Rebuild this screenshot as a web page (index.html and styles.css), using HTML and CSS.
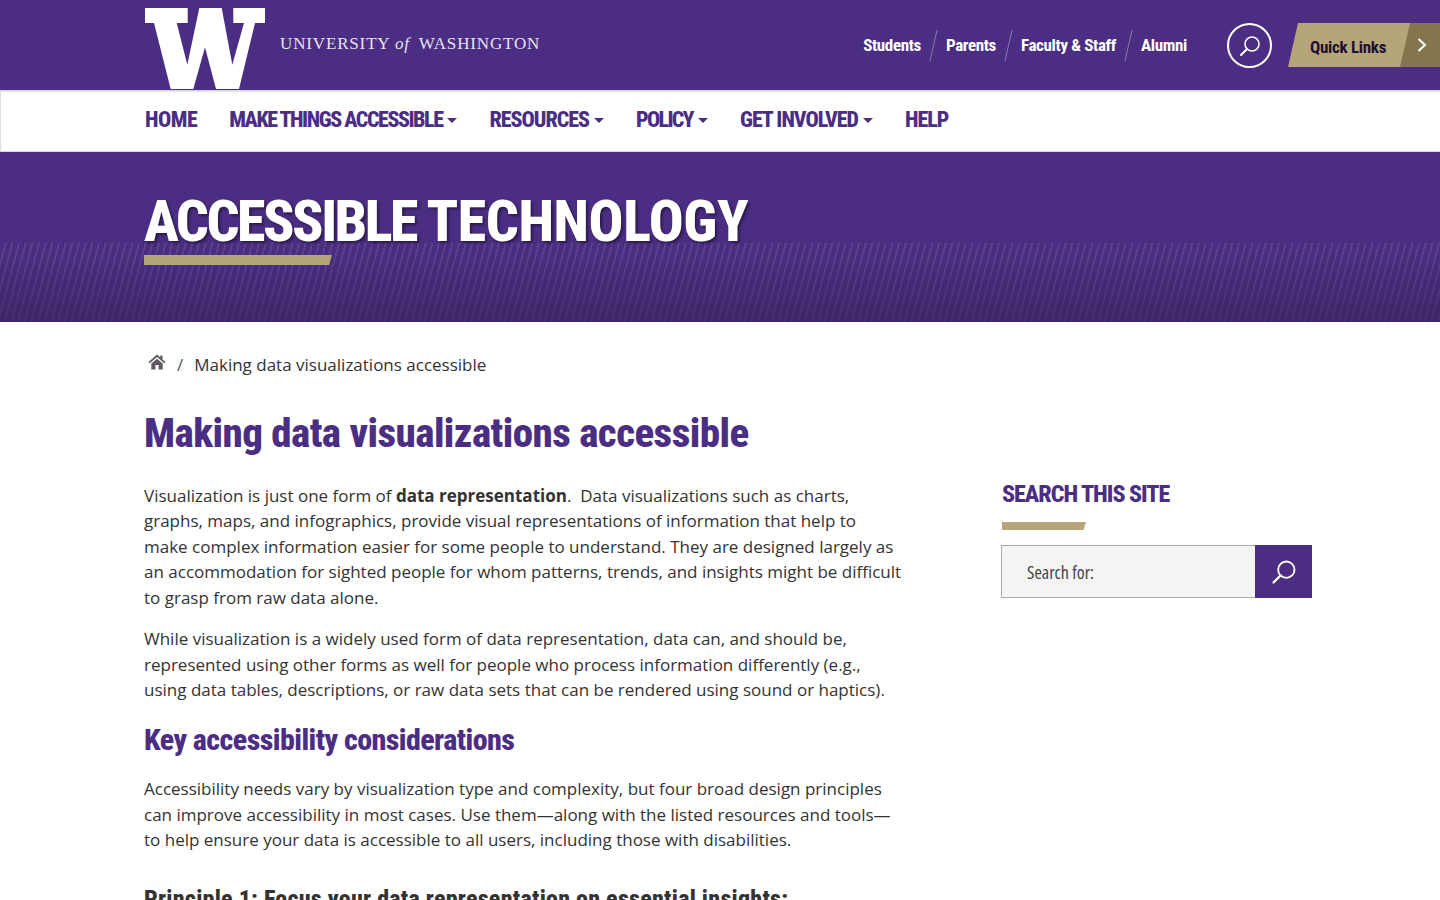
FILE: index.html
```html
<!DOCTYPE html>
<html lang="en">
<head>
<meta charset="utf-8">
<title>Making data visualizations accessible</title>
<link rel="stylesheet" href="styles.css">
</head>
<body>
<header class="top">
  <div class="brand">
    <svg class="w-logo" viewBox="0 0 121 82" aria-hidden="true"><polygon fill="#fff" points="0,0 42.7,0 42.7,15 31.7,15 42.3,56.7 54.3,0 76.7,0 87.3,56.7 99,15 88.3,15 88.3,0 120,0 120,15 110,15 94,81 71,81 60,39.3 48.3,81 25.7,81 9,15 0,15"/></svg>
    <span class="wordmark">UNIVERSITY <i>of</i> WASHINGTON</span>
  </div>
  <div class="top-right">
    <nav class="audience">
      <a>Students</a><a>Parents</a><a>Faculty &amp; Staff</a><a>Alumni</a>
    </nav>
    <div class="search-circle">
      <svg viewBox="0 0 24 24" width="24" height="24" aria-hidden="true"><circle cx="14" cy="10" r="7" fill="none" stroke="#fff" stroke-width="1.6"/><path d="M9 15 L3 21" stroke="#fff" stroke-width="2" stroke-linecap="round"/></svg>
    </div>
    <div class="quick">
      <span class="quick-label">Quick Links</span>
      <span class="quick-arrow"><svg viewBox="0 0 12 16" width="12" height="16" aria-hidden="true"><path d="M2.5 2 L9 8 L2.5 14" fill="none" stroke="#fff" stroke-width="2"/></svg></span>
    </div>
  </div>
</header>
<nav class="main-nav">
  <a class="loose">HOME</a>
  <a class="caret tight-more">MAKE THINGS ACCESSIBLE</a>
  <a class="caret">RESOURCES</a>
  <a class="caret tight">POLICY</a>
  <a class="caret">GET INVOLVED</a>
  <a>HELP</a>
</nav>
<section class="hero">
  <div class="hero-title"><span class="hero-first">ACCESSIBLE</span> <span class="hero-second">TECHNOLOGY</span></div>
  <div class="hero-bar"></div>
</section>
<div class="page">
  <main class="content">
    <div class="crumbs">
      <svg class="home" viewBox="0 0 18 16" width="18" height="16" aria-hidden="true"><path fill="#5f5a60" d="M9 0.5 L0.5 8 L1.7 9.3 L9 3 L16.3 9.3 L17.5 8 L14.5 5.4 V1.5 H12.3 V3.4 Z M3.3 9.6 V15.5 H7.4 V11 H10.6 V15.5 H14.7 V9.6 L9 4.7 Z"/></svg>
      <span class="sep">/</span>
      <span>Making data visualizations accessible</span>
    </div>
    <h1>Making data visualizations accessible</h1>
    <p>Visualization is just one form of <b>data representation</b>.&nbsp; Data visualizations such as charts, graphs, maps, and infographics, provide visual representations of information that help to make complex information easier for some people to understand. They are designed largely as an accommodation for sighted people for whom patterns, trends, and insights might be difficult to grasp from raw data alone.</p>
    <p>While visualization is a widely used form of data representation, data can, and should be, represented using other forms as well for people who process information differently (e.g., using data tables, descriptions, or raw data sets that can be rendered using sound or haptics).</p>
    <h2>Key accessibility considerations</h2>
    <p>Accessibility needs vary by visualization type and complexity, but four broad design principles can improve accessibility in most cases. Use them—along with the listed resources and tools—to help ensure your data is accessible to all users, including those with disabilities.</p>
    <h3>Principle 1: Focus your data representation on essential insights:</h3>
  </main>
  <aside class="side">
    <h4>SEARCH THIS SITE</h4>
    <div class="side-bar"></div>
    <div class="side-search">
      <div class="side-input">Search for:</div>
      <div class="side-btn"><svg viewBox="0 0 24 24" width="28" height="28" aria-hidden="true"><circle cx="14" cy="10" r="7" fill="none" stroke="#fff" stroke-width="1.6"/><path d="M9 15 L3 21" stroke="#fff" stroke-width="2" stroke-linecap="round"/></svg></div>
    </div>
  </aside>
</div>
</body>
</html>
```
FILE: styles.css
```css
* { box-sizing: border-box; }
html, body { margin: 0; height: 900px; overflow: hidden; background: #fff; }
body { font-family: "Open Sans", sans-serif; color: #333; font-size: 17px; }
.top { height: 90px; background: #4b2e83; display: flex; justify-content: space-between; padding-left: 145px; }
.brand { display: flex; align-items: flex-start; }
.w-logo { width: 121px; height: 82px; margin-top: 8px; }
.wordmark { font-family: "Liberation Serif", serif; color: #e8e3f0; font-size: 17px; letter-spacing: .85px; margin: 34px 0 0 14px; white-space: nowrap; }
.wordmark i { margin-right: 4px; }
.top-right { display: flex; align-items: flex-start; }
.audience { display: flex; margin-top: 30px; }
.audience a { font-family: Roboto, sans-serif; font-stretch: 75%; font-weight: 700; color: #fff; font-size: 17px; line-height: 30px; padding: 0 10px 0 15px; position: relative; letter-spacing: -.35px; }
.audience a + a::before { content: ""; position: absolute; left: 2px; top: 0; height: 31px; border-left: 1px solid #8a78ac; transform: skewX(-13deg); }
.search-circle { width: 45px; height: 45px; border: 2px solid #fff; border-radius: 50%; margin: 23px 16px 0 30px; display: flex; align-items: center; justify-content: center; }
.quick { display: flex; margin-top: 23px; height: 44px; }
.quick-label { width: 123px; background: #b7a57a; clip-path: polygon(10px 0, 100% 0, calc(100% - 10px) 100%, 0 100%); font-family: Roboto, sans-serif; font-stretch: 75%; font-weight: 700; font-size: 17px; letter-spacing: -.3px; color: #1d1130; line-height: 49px; padding-left: 22px; white-space: nowrap; }
.quick-arrow { width: 40px; margin-left: -11px; background: #85754d; clip-path: polygon(10px 0, 100% 0, 100% 100%, 0 100%); display: flex; align-items: center; justify-content: center; padding-left: 4px; }
.main-nav { height: 62px; display: flex; gap: 32px; padding: 0 0 2px 144px; align-items: center; background: #fff; border-left: 1px solid #ddd; border-bottom: 1px solid #d8d4e4; box-shadow: inset 0 3px 3px -2px rgba(0,0,0,.25); }
.main-nav a { font-family: Roboto, sans-serif; font-stretch: 75%; font-weight: 800; font-size: 22px; color: #4b2e83; letter-spacing: -1px; white-space: nowrap; }
.main-nav .loose { letter-spacing: -.5px; }
.main-nav .tight { letter-spacing: -1.7px; }
.main-nav .tight-more { letter-spacing: -1.45px; }
.caret::after { content: ""; display: inline-block; margin-left: 5px; vertical-align: 4px; border-top: 5px solid #4b2e83; border-left: 5px solid transparent; border-right: 5px solid transparent; }
.hero { height: 170px; padding: 38px 0 0 144px; position: relative; background: #4b2e83; }
.hero::before { content: ""; position: absolute; left: 0; right: 0; top: 91px; bottom: 0; background: linear-gradient(to bottom, rgba(60,38,100,0), rgba(50,32,85,.6)), repeating-linear-gradient(105deg, rgba(255,255,255,0) 0 4.6px, rgba(255,255,255,.1) 4.6px 6.44px); }
.hero-title { position: relative; font-family: Roboto, sans-serif; font-stretch: 75%; font-weight: 800; font-size: 58px; line-height: 62px; color: #fff; text-shadow: 2px 2px 3px rgba(0,0,0,.45); white-space: nowrap; word-spacing: -3px; }
.hero-first { letter-spacing: -2.5px; }
.hero-second { letter-spacing: -.4px; }
.hero-bar { position: relative; width: 188px; height: 10px; margin-top: 3px; background: #b7a57a; clip-path: polygon(0 0, 100% 0, 98.5% 100%, 0 100%); }
.page { display: flex; padding-left: 144px; }
.content { width: 760px; }
.crumbs { display: flex; align-items: center; height: 30px; margin-top: 27px; padding-left: 4px; font-size: 17px; }
.home { margin-top: -5px; }
.sep { margin: 0 11px; color: #555; }
h1 { font-family: Roboto, sans-serif; font-stretch: 75%; font-weight: 800; font-size: 41px; line-height: 48px; color: #4b2e83; margin: 30px 0 25.9px; letter-spacing: -.55px; white-space: nowrap; }
h2 { font-family: Roboto, sans-serif; font-stretch: 75%; font-weight: 800; font-size: 30px; line-height: 36px; color: #4b2e83; margin: 19.8px 0 18px; letter-spacing: -.55px; }
h3 { font-family: Roboto, sans-serif; font-stretch: 75%; font-weight: 800; font-size: 24px; letter-spacing: .25px; color: #333; margin: 32px 0 0; white-space: nowrap; }
p { margin: 0 0 15.7px; line-height: 25.5px; font-size: 17px; }
.side { margin: 157px 0 0 97px; width: 311px; }
h4 { font-family: Roboto, sans-serif; font-stretch: 75%; font-weight: 800; font-size: 24px; line-height: 30px; color: #4b2e83; margin: 0 0 13px 1px; letter-spacing: -1px; }
.side-bar { width: 84px; height: 8px; margin-left: 1px; background: #b7a57a; clip-path: polygon(0 0, 100% 0, 97% 100%, 0 100%); }
.side-search { display: flex; height: 53px; margin-top: 15px; }
.side-input { flex: 1; background: #f4f4f4; border: 1px solid #aaa; border-right: 0; padding-left: 25px; line-height: 52px; font-size: 18px; font-stretch: 75%; color: #444; }
.side-btn { width: 57px; background: #4b2e83; display: flex; align-items: center; justify-content: center; }
```
